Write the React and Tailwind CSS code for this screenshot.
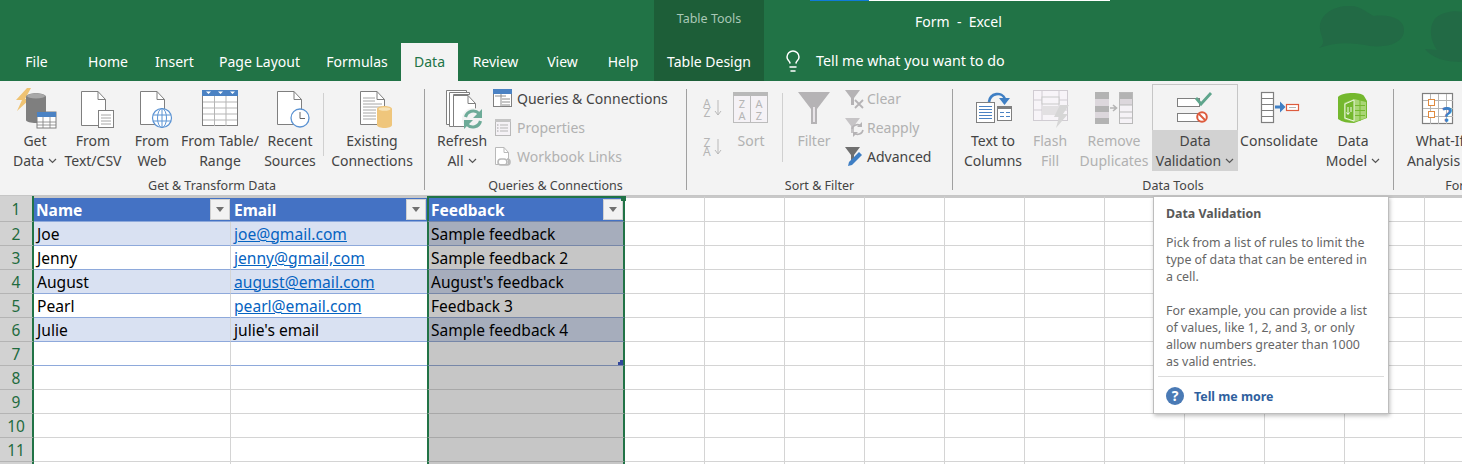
import React from "react";
import { Lightbulb } from "lucide-react";

const G = "#7f7f7f";
const B = "#4b82c3";

function Ico({ x, w, y = 84, h = 46, children }) {
  return (
    <svg width={w} height={h} viewBox={`${x} ${y} ${w} ${h}`} className="block shrink-0">
      {children}
    </svg>
  );
}

function Doc({ x, y, w, h, f = 8, stroke = G, fill = "#fff" }) {
  return (
    <g fill={fill} stroke={stroke} strokeWidth="1">
      <path d={`M${x + 0.5} ${y + 0.5}H${x + w - f}L${x + w - 0.5} ${y + f + 0.5}V${y + h - 0.5}H${x + 0.5}Z`} />
      <path d={`M${x + w - f} ${y + 0.5}V${y + f + 0.5}H${x + w - 0.5}`} fill="none" />
    </g>
  );
}

function Chev() {
  return (
    <svg width="9" height="6" viewBox="0 0 9 6" className="inline-block ml-[4px] mb-[2px]">
      <path d="M1 1l3.5 3.5L8 1" fill="none" stroke="#555" strokeWidth="1.2" />
    </svg>
  );
}

function Btn({ w, a, b, chev, off, icon, hi, ml }) {
  return (
    <div className={`flex flex-col items-center shrink-0 h-[87px] ${w} ${ml || ""}`}>
      <div className={`flex h-[46px] w-full justify-center ${hi ? "border border-[#c6c6c6] border-b-0" : ""}`}>{icon}</div>
      <div className={`w-full h-[41px] pt-[1px] text-center leading-[20px] whitespace-nowrap text-[14px] ${hi ? "bg-[#d2d2d2]" : ""} ${off ? "text-[#b1b1b1]" : "text-[#444444]"}`}>
        <div>{a}</div>
        <div>
          {b}
          {chev && <Chev />}
        </div>
      </div>
    </div>
  );
}

function Small({ icon, text, off }) {
  return (
    <div className={`flex items-center h-[29px] whitespace-nowrap text-[14px] ${off ? "text-[#b1b1b1]" : "text-[#444444]"}`}>
      <div className="w-[24px] shrink-0">{icon}</div>
      <span>{text}</span>
    </div>
  );
}

function Group({ w, label, children, cls }) {
  return (
    <div className={`flex flex-col shrink-0 ${w}`}>
      <div className={`flex h-[87px] ${cls || ""}`}>{children}</div>
      <div className="mt-[6px] h-[18px] text-center text-[12.5px] leading-[18px] text-[#444444] whitespace-nowrap">{label}</div>
    </div>
  );
}

const Sep = () => <div className="w-px shrink-0 mt-[5px] mb-[5px] bg-[#a0a0a0]" />;
const MinorSep = ({ cls }) => <div className={`w-px shrink-0 bg-[#d0d0d0] ${cls}`} />;

const IGet = (
  <Ico x={10} w={50}>
    <path d="M27 88h4l-6 11h5L17 111l5-11h-6z" fill="#efc373" />
    <path d="M26 97c0-5 20-5 20 0v23c0 4-20 4-20 0z" fill="#7f7f7f" />
    <ellipse cx="36" cy="96" rx="9" ry="2.5" fill="#a8a8a8" />
    <rect x="37" y="112" width="19" height="16" fill="#fff" stroke={G} />
    <rect x="37" y="112" width="19" height="5" fill={B} />
    <path d="M37 122h19M37 125h19M43 117v11M50 117v11" stroke={G} strokeWidth="0.8" />
  </Ico>
);
const IText = (
  <Ico x={68} w={50}>
    <Doc x={81} y={91} w={25} h={35} />
    <rect x="98.5" y="110.5" width="15" height="17" fill="#fff" stroke={G} />
    <path d="M101 115h10M101 118h10M101 121h10M101 124h10" stroke="#a6a6a6" />
  </Ico>
);
const IWeb = (
  <Ico x={127} w={50}>
    <Doc x={140} y={91} w={25} h={34} />
    <circle cx="162" cy="118" r="9.5" fill="#fff" stroke="#5b93d3" strokeWidth="1.2" />
    <ellipse cx="162" cy="118" rx="4.5" ry="9.5" fill="none" stroke="#5b93d3" />
    <path d="M153 115h18M153 121h18M162 108v20" stroke="#5b93d3" />
  </Ico>
);
const ITable = (
  <Ico x={195} w={50}>
    <rect x="202.5" y="90.5" width="35" height="35" fill="#fff" stroke={G} />
    <rect x="202" y="90" width="36" height="6" fill={B} />
    <path d="M206 91.5h5l-2.5 2.5zM218 91.5h5l-2.5 2.5zM230 91.5h5l-2.5 2.5z" fill="#fff" />
    <path d="M203 102h34M203 108h34M203 114h34M203 120h34M214.5 96v30M226 96v30" stroke="#b5b5b5" />
  </Ico>
);
const IRecent = (
  <Ico x={265} w={50}>
    <Doc x={277} y={91} w={25} h={34} />
    <circle cx="300" cy="118" r="9" fill="#fff" stroke="#5b93d3" strokeWidth="1.3" />
    <path d="M300 112v6.5h5" fill="none" stroke="#666" />
  </Ico>
);
const IExisting = (
  <Ico x={347} w={50}>
    <Doc x={360} y={91} w={25} h={34} />
    <path d="M363 98h12M363 101h12M363 104h19M363 107h19M363 110h13M363 113h13M363 116h13M363 119h13" stroke="#a6a6a6" />
    <path d="M377 109c0-4 15-4 15 0v16c0 4-15 4-15 0z" fill="#efc67c" />
    <ellipse cx="384.5" cy="109" rx="6" ry="1.8" fill="#f7e3b8" />
  </Ico>
);
const IRefresh = (
  <Ico x={437} w={50}>
    <path d="M446.5 90.5h20v2h-16v32h-4z" fill="#fff" stroke={G} />
    <path d="M449.5 92.5h20v2h-16v32h-4z" fill="#fff" stroke={G} />
    <Doc x={453} y={95} w={23} h={32} />
    <circle cx="473" cy="119" r="11" fill="#f3f3f3" />
    <path d="M465.5 117a8 8 0 0 1 13.5-3.5M480.5 121a8 8 0 0 1-13.5 3.5" fill="none" stroke="#6dab98" strokeWidth="3.2" />
    <path d="M482 109v9h-9zM464 129v-9h9z" fill="#6dab98" />
  </Ico>
);
const IQueries = (
  <Ico x={493} w={20} y={89} h={19}>
    <rect x="493.5" y="89.5" width="18" height="17" fill="#fff" stroke={G} />
    <rect x="493" y="89" width="19" height="5" fill={B} />
    <path d="M495 96h11M502 99h8M502 102h8M502 105h8M501 94v13" stroke="#8c8c8c" />
  </Ico>
);
const IProps = (
  <Ico x={493} w={20} y={118} h={18}>
    <rect x="495.5" y="118.5" width="15" height="16" fill="#f5f2f6" stroke="#b9b9b9" />
    <rect x="495" y="118" width="16" height="3" fill="#c4c4c4" />
    <path d="M500 124h8M500 127h8M500 130h8" stroke="#b5b5b5" />
    <path d="M497 124h1.5M497 127h1.5M497 130h1.5" stroke="#a0a0a0" />
  </Ico>
);
const ILinks = (
  <Ico x={493} w={20} y={147} h={20}>
    <Doc x={495} y={147} w={14} h={18} f={5} stroke="#b9b9b9" />
    <path d="M498 162a3 3 0 0 1 3-3h3M501 165a3 3 0 0 1 0-6M504 159a3 3 0 0 1 0 6h-3M507 159a3 3 0 0 1 0 6h-3" fill="none" stroke="#b9b9b9" strokeWidth="1.6" />
  </Ico>
);
const AZ = (top, bot) => (
  <div className="h-[20px] pl-[6px] flex items-center gap-[3px] text-[12px] leading-[9px] text-[#b5b5b5]">
    <div className="flex flex-col items-center">
      <span>{top}</span>
      <span>{bot}</span>
    </div>
    <svg width="8" height="18" viewBox="0 0 8 18">
      <path d="M4 1v15M1 12l3 4 3-4" fill="none" stroke="#b9b9b9" />
    </svg>
  </div>
);
const ISort = (
  <Ico x={728} w={46}>
    <rect x="733.5" y="92.5" width="34" height="30" fill="#f5f2f6" stroke="#bcbcbc" />
    <rect x="733" y="92" width="35" height="4" fill="#b9b9b9" />
    <path d="M750.5 96v26" stroke="#bcbcbc" />
    <text x="742" y="108" textAnchor="middle" fontSize="11" fill="#b5b5b5">Z</text>
    <text x="742" y="120" textAnchor="middle" fontSize="11" fill="#b5b5b5">A</text>
    <text x="759" y="108" textAnchor="middle" fontSize="11" fill="#b5b5b5">A</text>
    <text x="759" y="120" textAnchor="middle" fontSize="11" fill="#b5b5b5">Z</text>
  </Ico>
);
const IFilter = (
  <Ico x={789} w={50}>
    <path d="M798 92h32l-13 17v15h-6v-15z" fill="#b5b3b5" />
    <path d="M813 107h2v15h-2z" fill="#e8e4e8" />
  </Ico>
);
const IClear = (
  <Ico x={843} w={22} y={88} h={20}>
    <path d="M845 89h15l-6 8v7h-3v-7z" fill="#b5b3b5" />
    <path d="M855 99l8 8M863 99l-8 8" stroke="#b5b3b5" strokeWidth="1.8" />
  </Ico>
);
const IReapply = (
  <Ico x={843} w={22} y={118} h={20}>
    <path d="M845 118h15l-6 8v7h-3v-7z" fill="#c6c4c6" />
    <path d="M852 129a5.5 5.5 0 0 1 9-3M863 130a5.5 5.5 0 0 1-9 3" fill="none" stroke="#b5b3b5" strokeWidth="1.6" />
    <path d="M862 122v5h-5zM853 137v-5h5z" fill="#b5b3b5" />
  </Ico>
);
const IAdvanced = (
  <Ico x={843} w={22} y={146} h={21}>
    <path d="M845 147h15l-6 8v7h-3v-7z" fill="#6f6f6f" />
    <path d="M848 166l1-4 10-10 3 3-10 10z" fill="#3f7fc4" />
  </Ico>
);
const ITextCol = (
  <Ico x={969} w={48}>
    <path d="M989 102c1-9 13-11 16-3" fill="none" stroke="#3f7fc4" strokeWidth="2.6" />
    <path d="M999 98h11l-5.5 7z" fill="#3f7fc4" />
    <rect x="976.5" y="102.5" width="18" height="20" fill="#fff" stroke={G} />
    <path d="M979 106.5h13M979 109.5h13M979 112.5h13M979 115.5h13M979 118.5h13" stroke="#4b82c3" />
    <rect x="997.5" y="106.5" width="14" height="14" fill="#fff" stroke={G} />
    <rect x="997" y="106" width="15" height="3" fill="#7f7f7f" />
    <path d="M1000 112.5h4M1006 112.5h4M1000 116.5h4M1006 116.5h4" stroke="#4b82c3" />
  </Ico>
);
const IFlash = (
  <Ico x={1028} w={44}>
    <rect x="1033.5" y="90.5" width="34" height="30" fill="#f7f4f8" stroke="#d0ccd2" />
    <path d="M1034 100h34M1034 110h34M1042 90v30M1059 90v30" stroke="#d0ccd2" />
    <rect x="1042" y="97" width="17" height="7" fill="#f7f4f8" stroke="#c9c9c9" />
    <rect x="1042" y="106" width="18" height="9" fill="#e2e0e2" />
    <path d="M1060 105h9l-6 9h5l-12 14 3-11h-5z" fill="#d6d6d6" />
  </Ico>
);
const IRemove = (
  <Ico x={1091} w={46}>
    <rect x="1095" y="92" width="14" height="32" fill="#b3b3b3" />
    <rect x="1095" y="99" width="14" height="7" fill="#dcd7dc" />
    <rect x="1095" y="112" width="14" height="6" fill="#dcd7dc" />
    <rect x="1119.5" y="92.5" width="13" height="31" fill="#f5f2f6" stroke="#b9b9b9" />
    <rect x="1120" y="93" width="12" height="6" fill="#b3b3b3" />
    <rect x="1120" y="99" width="12" height="6" fill="#dcd7dc" />
    <path d="M1120 105h12M1120 112h12M1120 118h12" stroke="#b9b9b9" />
    <path d="M1110 108h6M1113 105l3.5 3-3.5 3" fill="none" stroke="#b5b5b5" strokeWidth="1.6" />
  </Ico>
);
const IValid = (
  <Ico x={1172} w={46} y={84} h={45}>
    <rect x="1177.5" y="97.5" width="22" height="8" fill="#fff" stroke={G} />
    <rect x="1177.5" y="112.5" width="22" height="8" fill="#fff" stroke={G} />
    <path d="M1196 97l5 6 10-11" fill="none" stroke="#5fa58c" strokeWidth="2.8" />
    <circle cx="1202" cy="116" r="4.8" fill="#fff" stroke="#dd5b3d" strokeWidth="2" />
    <path d="M1199 113l6 6" stroke="#dd5b3d" strokeWidth="2" />
  </Ico>
);
const ICons = (
  <Ico x={1256} w={46}>
    <rect x="1261.5" y="92.5" width="12" height="30" fill="#fff" stroke={G} strokeWidth="1.2" />
    <path d="M1262 98.5h12M1262 104.5h12M1262 110.5h12M1262 116.5h12" stroke={G} />
    <path d="M1275 105.5h5v-4l5.5 5.5-5.5 5.5v-4h-5z" fill="#3f7fc4" />
    <rect x="1286.5" y="104.5" width="12" height="6" fill="#fff" stroke="#dd5b3d" strokeWidth="1.2" />
    <path d="M1289 107.5h7" stroke="#b5b5b5" />
  </Ico>
);
const IModel = (
  <Ico x={1330} w={46}>
    <path d="M1338 97c4-5 24-5 26-1l3 5v17l-13 5c-6 0-12-1-16-4z" fill="#74b82e" />
    <path d="M1344 103l10-4 12 3v16l-12 4-10-3z" fill="#a9d676" />
    <path d="M1345 104l9-4v21l-9-3z" fill="#74b82e" stroke="#fff" strokeWidth="0.8" />
    <path d="M1355 105.5h10M1355 110.5h10M1355 115.5h10M1360 100v21" stroke="#74b82e" strokeWidth="1" />
    <path d="M1348 107v7M1346.5 112.5l1.5 2 1.5-2M1351 107v5" fill="none" stroke="#fff" strokeWidth="0.9" />
  </Ico>
);
const IWhatIf = (
  <Ico x={1420} w={46}>
    <rect x="1425.5" y="93.5" width="30" height="30" fill="#fff" stroke={G} strokeWidth="1.2" />
    <path d="M1426 100.5h30M1426 108.5h30M1426 116.5h30M1433.5 94v30M1441.5 94v30M1449.5 94v30" stroke="#b5b5b5" />
    <rect x="1431.5" y="99.5" width="6" height="6" fill="#fff" stroke="#e08a3f" />
    <rect x="1431.5" y="111.5" width="6" height="6" fill="#fff" stroke="#e08a3f" />
    <text x="1445" y="122" fontSize="21" fontWeight="700" fill="#3f7fc4">?</text>
  </Ico>
);

const Tab = ({ w, children }) => (
  <div className={`${w} h-full shrink-0 flex items-center justify-center pb-[2px] text-white text-[14px] whitespace-nowrap`}>{children}</div>
);

const GRID = Array.from({ length: 11 });

function Filt() {
  return (
    <div className="w-[20px] h-[21px] shrink-0 bg-[#f2f2f2] border border-[#d0d0d0] flex items-center justify-center">
      <svg width="8" height="5" viewBox="0 0 8 5">
        <path d="M0 0h8L4 5z" fill="#707070" />
      </svg>
    </div>
  );
}

function Row({ n, a, b, c, band, first, link, seven, plain }) {
  const h = first ? "h-[26px]" : "h-[24px]";
  const line = plain ? "border-[#d4d4d4]" : "border-[#8ea9db]";
  const base = `${h} shrink-0 border-b flex items-center pt-[2px]`;
  const bg = band ? "bg-[#d9e1f2]" : "bg-white";
  return (
    <div className="flex">
      <div className={`${h} w-[34px] shrink-0 bg-[#d2d2d2] border-r-2 border-r-[#217346] border-b border-b-[#b4b4b4] flex items-center justify-center text-[15.5px] text-[#1f6b3e] ${first ? "pt-[3px]" : "pt-[2px]"}`}>{n}</div>
      {first ? (
        <>
          <div className="h-[26px] w-[197px] shrink-0 border-t-2 border-t-[#c8c8c8] bg-[#4472c4] border-b border-b-[#8ea9db] flex items-center justify-between pl-[2px] pr-[1px] text-[15.5px] font-bold text-white">
            <span className="pt-[3px]">{a}</span>
            <Filt />
          </div>
          <div className="h-[26px] w-[196px] shrink-0 border-t-2 border-t-[#c8c8c8] bg-[#4472c4] border-b border-b-[#8ea9db] flex items-center justify-between pl-[3px] pr-[1px] text-[15.5px] font-bold text-white">
            <span className="pt-[3px]">{b}</span>
            <Filt />
          </div>
        </>
      ) : (
        <>
          <div className={`${base} w-[197px] ${line} ${bg} border-r border-r-[#d4d4d4] pl-[3px] text-[15.6px] text-black`}>{a}</div>
          <div className={`${base} w-[196px] ${line} ${bg} pl-[3px] text-[15.6px] ${link ? "text-[#0563c1] underline" : "text-black"}`}>{b}</div>
        </>
      )}
      <div
        className={`relative ${h} w-[198px] shrink-0 border-x-2 border-x-[#217346] border-b flex items-center pl-[2px] ${first ? "text-[15.5px] border-t-2 border-t-[#217346] bg-[#4472c4] border-b-[#7787a8] font-bold text-white justify-between pr-0" : `pt-[2px] text-[15.5px] text-black ${plain ? "border-b-[#a8a8a8] bg-[#c6c6c6]" : `border-b-[#7787a8] ${band ? "bg-[#a6adbc]" : "bg-[#c6c6c6]"}`}`}`}
      >
        {first ? <span className="pt-[3px]">{c}</span> : c}
        {first && <Filt />}
        {first && <div className="absolute right-[-3px] top-[-2px] w-[5px] h-[5px] bg-[#217346]" />}
        {seven && <div className="absolute right-0 bottom-0 w-[5px] h-[3px] bg-[#33479b]" />}
        {seven && <div className="absolute right-0 bottom-0 w-[3px] h-[5px] bg-[#33479b]" />}
      </div>
      {GRID.map((_, i) => (
        <div key={i} className={`${h} w-[80px] shrink-0 border-r border-b border-[#d4d4d4] bg-white ${first ? "border-t-2 border-t-[#c8c8c8]" : ""}`} />
      ))}
    </div>
  );
}

export default function App() {
  return (
    <div className="relative w-[1462px] h-[464px] overflow-hidden bg-white font-['Noto_Sans',sans-serif]">
      <div className="relative h-[81px] bg-[#217346]">
        <div className="absolute top-0 left-[810px] w-[300px] h-px flex">
          <div className="w-[59px] bg-[#0f7bd8]" />
          <div className="flex-1 bg-white" />
        </div>
        <svg width="144" height="81" viewBox="1318 0 144 81" className="absolute right-0 top-0">
          <path d="M1319 48C1325 44 1323 40 1321 34C1315 15 1335 5 1350 6C1362 6 1368 14 1374 16C1392 14 1404 20 1404 30C1404 42 1390 48 1370 46C1350 42 1335 42 1319 48Z" fill="#226a45" />
          <path d="M1425 49C1430 49 1434 50 1437 50C1430 40 1429 28 1434 20C1440 12 1455 10 1462 12V62C1445 62 1432 58 1425 49Z" fill="#226a45" />
        </svg>
        <div className="relative flex h-[43px]">
          <div className="w-[654px] shrink-0" />
          <div className="w-[110px] shrink-0 bg-[#1d5e38] flex items-center justify-center text-[12.5px] text-[#a9c8b6] pb-[5px]">Table Tools</div>
          <div className="ml-[151px] pt-[11px] text-[14px] text-white whitespace-pre">Form  -  Excel</div>
        </div>
        <div className="relative flex h-[38px]">
          <Tab w="w-[73px]">File</Tab>
          <Tab w="w-[70px]">Home</Tab>
          <Tab w="w-[63px]">Insert</Tab>
          <Tab w="w-[107px]">Page Layout</Tab>
          <Tab w="w-[88px]">Formulas</Tab>
          <div className="w-[57px] h-full shrink-0 bg-[#f3f3f3] flex items-center justify-center pb-[2px] text-[#217346] text-[14px]">Data</div>
          <Tab w="w-[75px]">Review</Tab>
          <Tab w="w-[59px]">View</Tab>
          <Tab w="w-[62px]">Help</Tab>
          <div className="w-[110px] h-full shrink-0 bg-[#1d5e38] flex items-center justify-center pb-[2px] text-white text-[14px]">Table Design</div>
          <div className="ml-[17px] flex items-center gap-[11px] pb-[2px] text-white text-[14.3px] whitespace-nowrap">
            <Lightbulb size={24} strokeWidth={1.5} />
            <span>Tell me what you want to do</span>
          </div>
        </div>
      </div>

      <div className="flex h-[115px] pt-[3px] bg-[#f3f3f3] border-b border-[#c6c6c6]">
        <Group w="w-[424px]" label="Get & Transform Data" cls="pl-[8px]">
          <Btn w="w-[54px]" a="Get" b="Data" chev icon={IGet} />
          <Btn w="w-[62px]" a="From" b="Text/CSV" icon={IText} />
          <Btn w="w-[56px]" a="From" b="Web" icon={IWeb} />
          <Btn w="w-[80px]" a="From Table/" b="Range" icon={ITable} />
          <Btn w="w-[60px]" a="Recent" b="Sources" icon={IRecent} />
          <MinorSep cls="ml-[3px] mt-[9px] mb-[15px]" />
          <Btn w="w-[92px]" ml="ml-[2px]" a="Existing" b="Connections" icon={IExisting} />
        </Group>
        <Sep />
        <Group w="w-[261px]" label="Queries & Connections" cls="pl-[12px]">
          <Btn w="w-[50px]" a="Refresh" b="All" chev icon={IRefresh} />
          <div className="ml-[6px] flex flex-col">
            <Small icon={IQueries} text="Queries & Connections" />
            <Small icon={IProps} text="Properties" off />
            <Small icon={ILinks} text="Workbook Links" off />
          </div>
        </Group>
        <Sep />
        <Group w="w-[265px]" label="Sort & Filter" cls="pl-[10px]">
          <div className="w-[29px] shrink-0 flex flex-col pt-[14px] gap-[19px]">
            {AZ("A", "Z")}
            {AZ("Z", "A")}
          </div>
          <Btn w="w-[46px]" ml="ml-[2px]" a="Sort" b="" off icon={ISort} />
          <MinorSep cls="ml-[8px] mt-[9px] mb-[9px]" />
          <Btn w="w-[50px]" ml="ml-[6px]" a="Filter" b="" off icon={IFilter} />
          <div className="ml-[4px] flex flex-col">
            <Small icon={IClear} text="Clear" off />
            <Small icon={IReapply} text="Reapply" off />
            <Small icon={IAdvanced} text="Advanced" />
          </div>
        </Group>
        <Sep />
        <Group w="w-[440px]" label="Data Tools" cls="pl-[5px]">
          <Btn w="w-[70px]" a="Text to" b="Columns" icon={ITextCol} />
          <Btn w="w-[44px]" a="Flash" b="Fill" off icon={IFlash} />
          <Btn w="w-[76px]" ml="ml-[4px]" a="Remove" b="Duplicates" off icon={IRemove} />
          <Btn w="w-[86px]" a="Data" b="Validation" chev hi icon={IValid} />
          <Btn w="w-[82px]" a="Consolidate" b="" icon={ICons} />
          <Btn w="w-[66px]" a="Data" b="Model" chev icon={IModel} />
        </Group>
        <Sep />
        <Group w="w-[152px]" label="Forecast" cls="pl-[8px]">
          <Btn w="w-[76px]" a="What-If" b="Analysis" chev icon={IWhatIf} />
        </Group>
      </div>

      <div className="flex flex-col">
        <Row first n="1" a="Name" b="Email" c="Feedback" />
        <Row band n="2" a="Joe" b="joe@gmail.com" c="Sample feedback" link />
        <Row n="3" a="Jenny" b="jenny@gmail,com" c="Sample feedback 2" link />
        <Row band n="4" a="August" b="august@email.com" c="August's feedback" link />
        <Row n="5" a="Pearl" b="pearl@email.com" c="Feedback 3" link />
        <Row band n="6" a="Julie" b="julie's email" c="Sample feedback 4" />
        <Row seven n="7" />
        <Row plain n="8" />
        <Row plain n="9" />
        <Row plain n="10" />
        <Row plain n="11" />
        <Row plain n="12" />
      </div>

      <div className="absolute left-[1153px] top-[196px] w-[236px] h-[218px] bg-white border border-[#bdbdbd] shadow-[1px_2px_4px_rgba(0,0,0,0.25)] px-[4px] text-[12.4px] leading-[17px] text-[#666666]">
        <div className="px-[8px] pt-[8px] font-bold text-[#595959]">Data Validation</div>
        <div className="px-[8px] pt-[12px]">
          Pick from a list of rules to limit the
          <br />
          type of data that can be entered in
          <br />a cell.
        </div>
        <div className="px-[8px] pt-[17px]">
          For example, you can provide a list
          <br />
          of values, like 1, 2, and 3, or only
          <br />
          allow numbers greater than 1000
          <br />
          as valid entries.
        </div>
        <div className="mt-[6px] border-t border-[#dcdcdc] flex items-center pl-[8px] pt-[10px] gap-[10px] font-bold text-[#2f5f9e]">
          <div className="w-[18px] h-[18px] rounded-full bg-[#4a7ab5] flex items-center justify-center text-white text-[14px] font-bold leading-none">?</div>
          <span>Tell me more</span>
        </div>
      </div>
    </div>
  );
}
